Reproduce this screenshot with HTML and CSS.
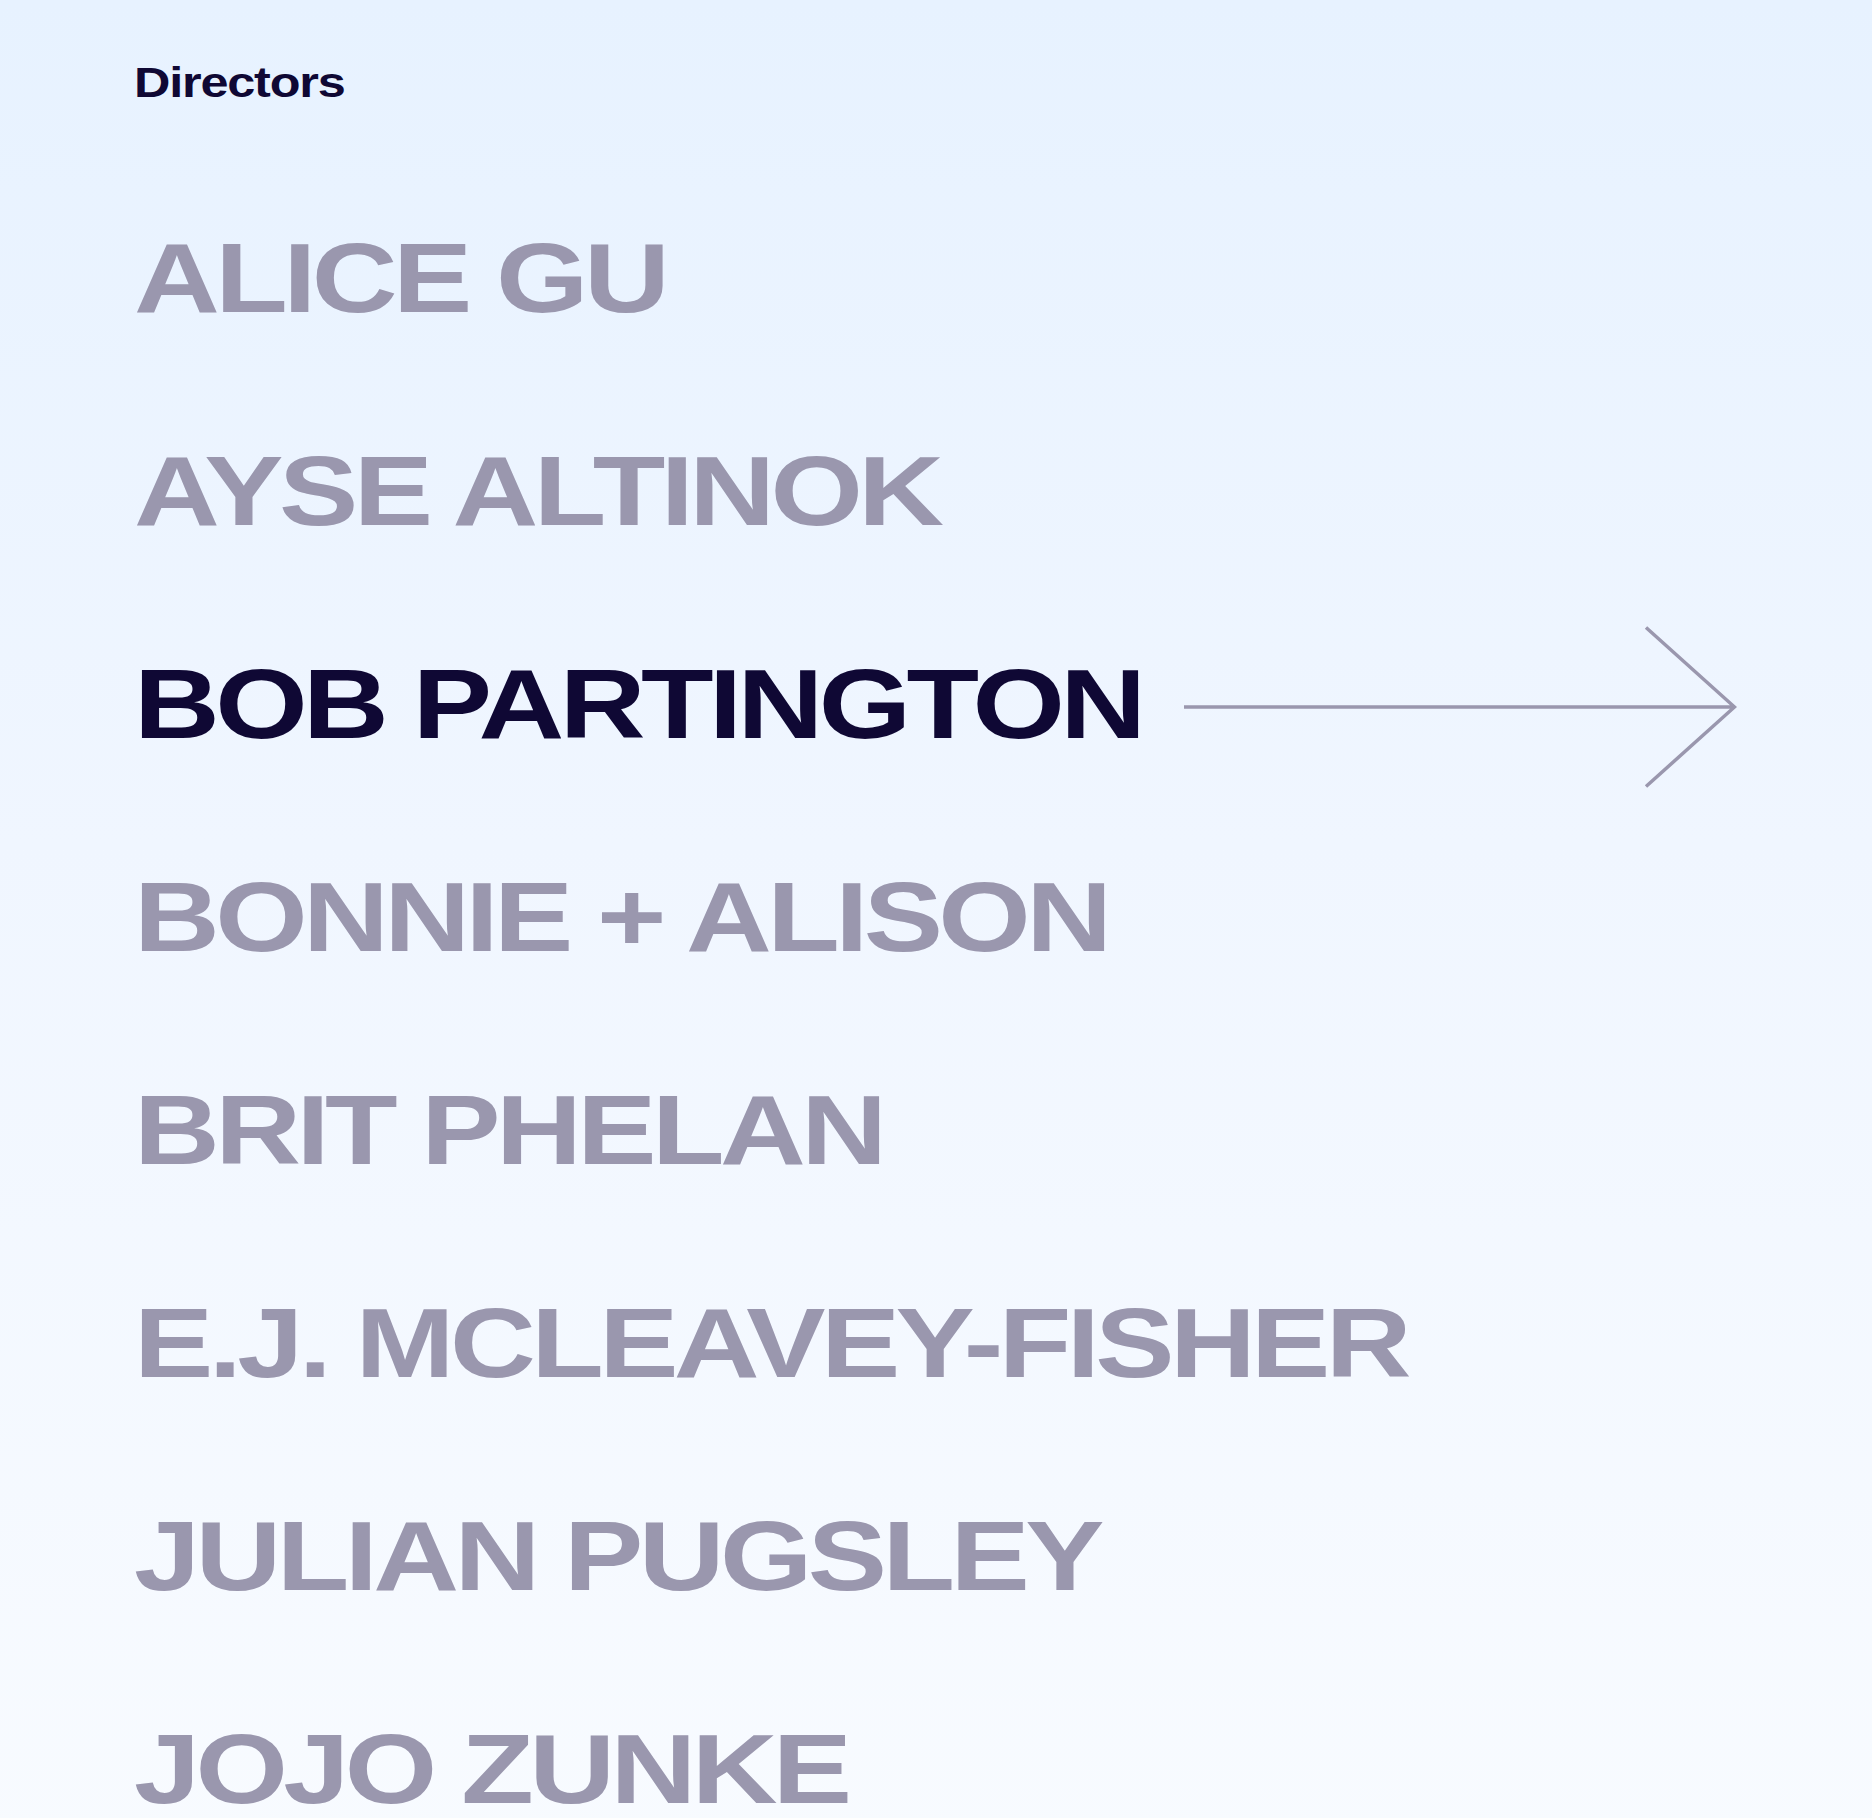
FILE: index.html
```html
<!DOCTYPE html>
<html lang="en">
<head>
    <meta charset="UTF-8">
    <meta name="viewport" content="width=device-width, initial-scale=1.0">
    <title>Directors</title>
    <link rel="stylesheet" href="styles.css">
</head>
<body>
    <div class="page">
        <h2 class="heading"><span>Directors</span></h2>
        <ul class="directors">
            <li class="director"><a href="#"><span class="name">ALICE GU</span></a></li>
            <li class="director"><a href="#"><span class="name">AYSE ALTINOK</span></a></li>
            <li class="director active">
                <a href="#">
                    <span class="name">BOB PARTINGTON</span>
                    <svg class="arrow" viewBox="0 0 553 162" width="553" height="162">
                        <path d="M0 81 H550 M462 1.5 L550.5 81 L462 160.5" fill="none" stroke="#9a97ae" stroke-width="3.5"/>
                    </svg>
                </a>
            </li>
            <li class="director"><a href="#"><span class="name">BONNIE + ALISON</span></a></li>
            <li class="director"><a href="#"><span class="name">BRIT PHELAN</span></a></li>
            <li class="director"><a href="#"><span class="name">E.J. MCLEAVEY-FISHER</span></a></li>
            <li class="director"><a href="#"><span class="name">JULIAN PUGSLEY</span></a></li>
            <li class="director"><a href="#"><span class="name">JOJO ZUNKE</span></a></li>
        </ul>
    </div>
</body>
</html>
```

FILE: styles.css
```css
html {
    background: #f7faff;
}
body {
    margin: 0;
    font-family: "Liberation Sans", Arial, sans-serif;
    background: linear-gradient(180deg, #e7f2ff 0%, #f0f6ff 45%, #f8fbff 100%);
    min-height: 1818px;
    overflow: hidden;
}
.page {
    padding: 62px 135px 0 134px;
}
.heading {
    margin: 0;
    font-size: 42px;
    line-height: 42px;
    font-weight: 700;
    color: #0f0834;
}
.heading span {
    display: inline-block;
    letter-spacing: -1px;
    transform: scaleX(1.2);
    transform-origin: left center;
}
.directors {
    list-style: none;
    margin: 67px 0 0;
    padding: 0;
}
.director a {
    display: flex;
    align-items: center;
    height: 213px;
    text-decoration: none;
    color: #9a97ae;
}
.name {
    display: inline-block;
    font-size: 99px;
    line-height: 213px;
    font-weight: 700;
    letter-spacing: -3.8px;
    white-space: nowrap;
    transform: scaleX(1.2);
    transform-origin: left center;
}
.director.active a {
    color: #0f0834;
}
.arrow {
    margin-left: auto;
    margin-top: 7px;
    flex-shrink: 0;
}
```
